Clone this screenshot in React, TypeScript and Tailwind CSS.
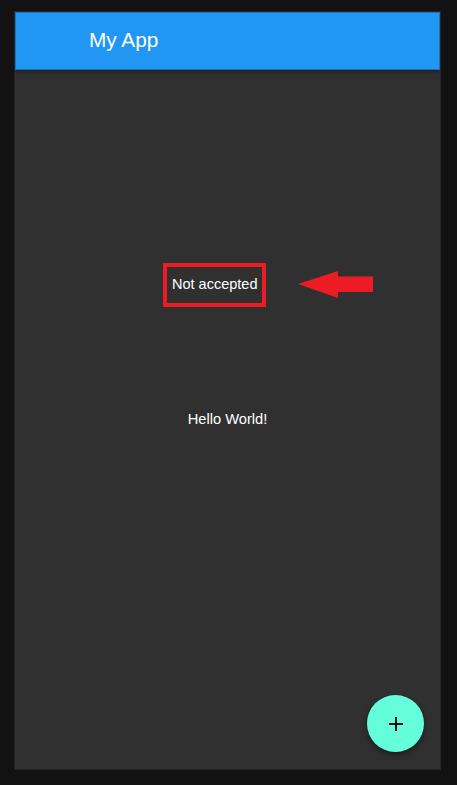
const ArrowMark = () => (
  <svg width="76" height="28" viewBox="0 0 76 28" aria-hidden="true">
    <polygon points="0,13 40,0 40,5.5 75,5.5 75,21 40,21 40,27" fill="#ED1C24" />
  </svg>
);

const PlusIcon = () => (
  <svg width="16" height="16" viewBox="0 0 16 16" aria-hidden="true">
    <path d="M8 1v14M1 8h14" stroke="#111" strokeWidth={2} />
  </svg>
);

const App = () => {
  return (
    <div
      className="w-[457px] h-[785px] bg-[#121212] pt-[11px] pl-[14px]"
      style={{ fontFamily: '"Liberation Sans", Arial, sans-serif' }}
    >
      <div className="relative w-[427px] h-[759px] bg-[#303030] flex flex-col overflow-hidden border border-[#262626]">
        {/* app bar */}
        <header className="h-[58px] shrink-0 bg-[#2196F3] border border-[#1c6fb8] shadow-[0_2px_4px_rgba(0,0,0,0.35)] flex items-center pl-[73px] pb-[2px] text-white text-[20.8px] z-10">
          My App
        </header>

        <main className="flex-1 flex flex-col">
          <div className="mt-[193px] ml-[148px] flex items-center gap-[32px]">
            <div className="h-[44px] border-4 border-[#ED1C24] px-[5px] flex items-center text-white text-[14.5px]">
              Not accepted
            </div>
            <ArrowMark />
          </div>

          <p className="mt-[102px] self-center text-white text-[14.7px] leading-5">Hello World!</p>
        </main>

        <button
          type="button"
          className="absolute right-[16px] bottom-[17px] w-[57px] h-[57px] rounded-full bg-[#64FFDA] shadow-[0_3px_6px_rgba(0,0,0,0.4)] flex items-center justify-center"
        >
          <PlusIcon />
        </button>
      </div>
    </div>
  );
};

export default App;
